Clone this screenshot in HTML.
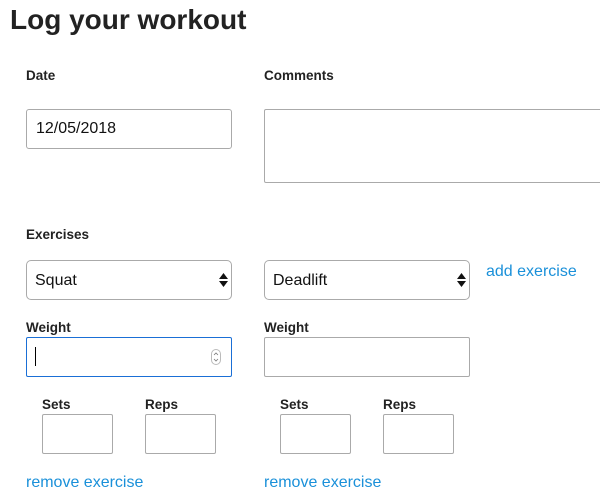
<!DOCTYPE html>
<html><head><style>
*{box-sizing:border-box;margin:0;padding:0}
body{width:600px;height:500px;overflow:hidden;background:#fff;font-family:"Liberation Sans",Arial,sans-serif;color:#222;position:relative}
.a{position:absolute}
h1{position:absolute;left:10px;top:4px;font-size:28px;font-weight:bold;color:#222}
.l{position:absolute;font-size:13.5px;font-weight:bold;color:#222}
.box{position:absolute;border:1px solid #aaa;border-radius:3px;background:#fff}
.t{position:absolute;font-size:16px;color:#111}
.lnk{position:absolute;font-size:16px;color:#1a90d9}
.arr{position:absolute;width:9px;height:16px}
</style></head><body>
<h1>Log your workout</h1>
<div class="l" style="left:26px;top:68px">Date</div>
<div class="l" style="left:264px;top:68px">Comments</div>
<div class="box" style="left:26px;top:109px;width:206px;height:40px"></div>
<div class="t" style="left:36px;top:120px">12/05/2018</div>
<div class="box" style="left:264px;top:109px;width:345px;height:74px;border-radius:2px"></div>
<div class="l" style="left:26px;top:227px">Exercises</div>
<div class="box" style="left:26px;top:260px;width:206px;height:40px;border-radius:5px"></div>
<div class="t" style="left:35px;top:272px">Squat</div>
<svg class="arr" style="left:219px;top:272px" viewBox="0 0 9 16"><path d="M4.5 1L9 7H0Z M4.5 15L9 9H0Z" fill="#111"/></svg>
<div class="box" style="left:264px;top:260px;width:206px;height:40px;border-radius:5px"></div>
<div class="t" style="left:273px;top:272px">Deadlift</div>
<svg class="arr" style="left:457px;top:272px" viewBox="0 0 9 16"><path d="M4.5 1L9 7H0Z M4.5 15L9 9H0Z" fill="#111"/></svg>
<div class="lnk" style="left:486px;top:263px">add exercise</div>
<div class="l" style="left:26px;top:320px">Weight</div>
<div class="l" style="left:264px;top:320px">Weight</div>
<div class="box" style="left:26px;top:337px;width:206px;height:40px;border:1px solid #1a6fd6;border-radius:2px"></div>
<div class="a" style="left:35px;top:347px;width:1px;height:19px;background:#000"></div>
<svg class="a" style="left:211px;top:349px" width="10" height="16" viewBox="0 0 10 16"><rect x="0.5" y="0.5" width="9" height="15" rx="4.5" fill="#fff" stroke="#bbb"/><path d="M3 6L5 4L7 6M3 10L5 12L7 10" fill="none" stroke="#777" stroke-width="0.8"/></svg>
<div class="box" style="left:264px;top:337px;width:206px;height:40px;border-radius:2px"></div>
<div class="l" style="left:42px;top:397px">Sets</div>
<div class="l" style="left:145px;top:397px">Reps</div>
<div class="l" style="left:280px;top:397px">Sets</div>
<div class="l" style="left:383px;top:397px">Reps</div>
<div class="box" style="left:42px;top:414px;width:71px;height:40px;border-radius:2px"></div>
<div class="box" style="left:145px;top:414px;width:71px;height:40px;border-radius:2px"></div>
<div class="box" style="left:280px;top:414px;width:71px;height:40px;border-radius:2px"></div>
<div class="box" style="left:383px;top:414px;width:71px;height:40px;border-radius:2px"></div>
<div class="lnk" style="left:26px;top:474px">remove exercise</div>
<div class="lnk" style="left:264px;top:474px">remove exercise</div>
</body></html>
